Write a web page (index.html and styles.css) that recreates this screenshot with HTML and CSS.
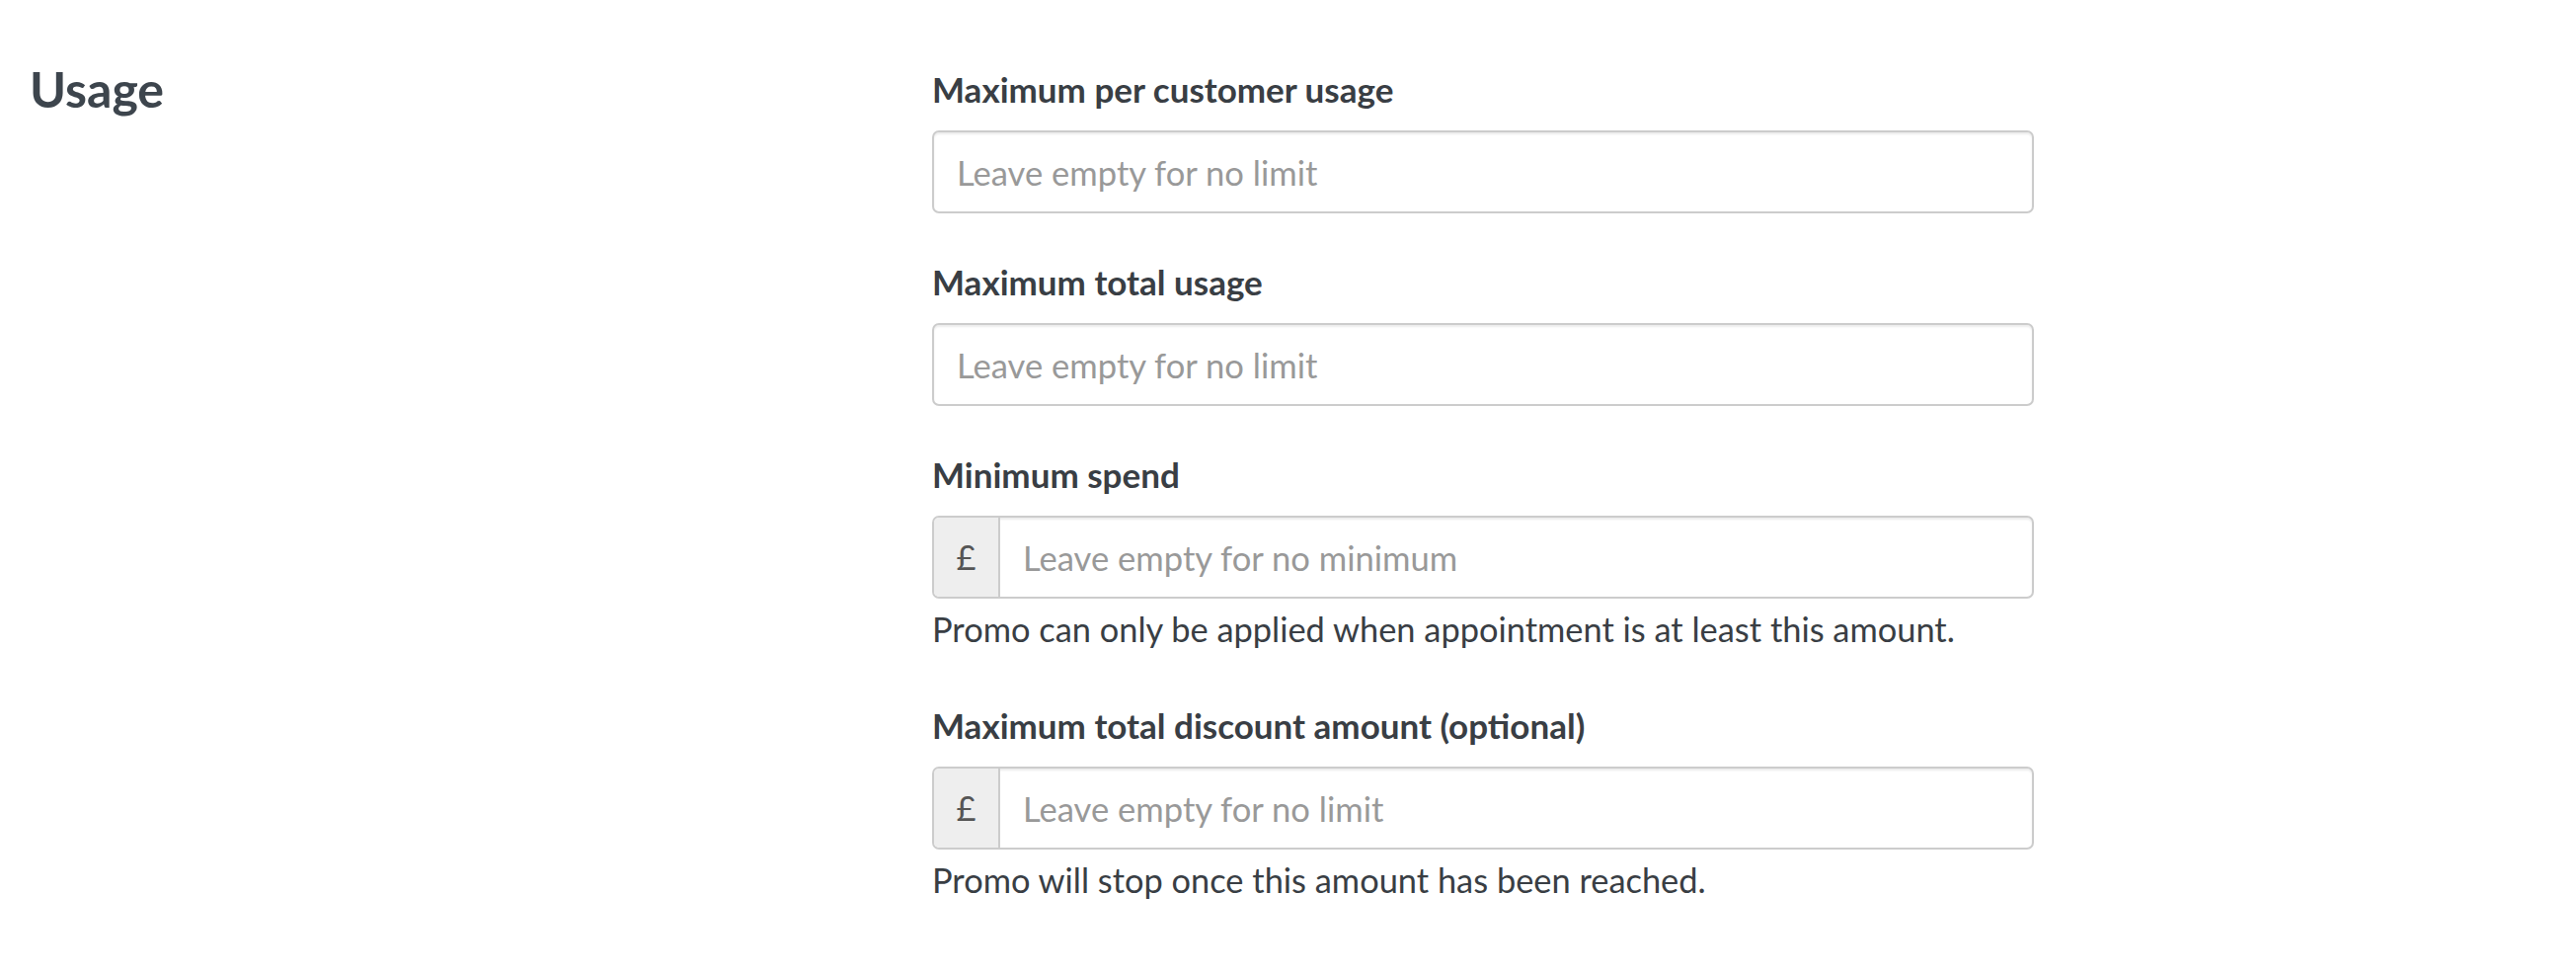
FILE: index.html
```html
<!DOCTYPE html>
<html lang="en">
<head>
<meta charset="utf-8">
<title>Usage</title>
<link rel="stylesheet" href="styles.css">
</head>
<body>
<section class="section">
  <div class="section-title-col">
    <h2 class="section-title">Usage</h2>
  </div>
  <form class="form-col">
    <div class="form-group">
      <label class="form-label">Maximum per customer usage</label>
      <div class="input-box">
        <input class="form-input" type="text" placeholder="Leave empty for no limit">
      </div>
    </div>
    <div class="form-group">
      <label class="form-label">Maximum total usage</label>
      <div class="input-box">
        <input class="form-input" type="text" placeholder="Leave empty for no limit">
      </div>
    </div>
    <div class="form-group has-help">
      <label class="form-label">Minimum spend</label>
      <div class="input-box">
        <span class="addon">£</span>
        <input class="form-input" type="text" placeholder="Leave empty for no minimum">
      </div>
      <p class="help">Promo can only be applied when appointment is at least this amount.</p>
    </div>
    <div class="form-group has-help">
      <label class="form-label">Maximum total discount amount (optional)</label>
      <div class="input-box">
        <span class="addon">£</span>
        <input class="form-input" type="text" placeholder="Leave empty for no limit">
      </div>
      <p class="help">Promo will stop once this amount has been reached.</p>
    </div>
  </form>
</section>
</body>
</html>
```
FILE: styles.css
```css
html, body {
  margin: 0;
  padding: 0;
  background: #ffffff;
}

body {
  font-family: Lato, "Open Sans", "Liberation Sans", sans-serif;
  font-size: 34.4px;
  line-height: 48px;
  color: #393e44;
}

.section {
  display: grid;
  grid-template-columns: 914px 1116px;
  padding: 60px 0 60px 30px;
}

.section-title {
  margin: 0;
  font-size: 50px;
  line-height: 60px;
  font-weight: 700;
  color: #3d454d;
}

.form-col {
  margin: 0;
  padding-top: 5.5px;
}

.form-group {
  margin-bottom: 44.5px;
}

.form-group.has-help {
  margin-bottom: 48.5px;
}

.form-label {
  display: block;
  font-size: 35px;
  font-weight: 700;
  margin-bottom: 18.5px;
}

.input-box {
  display: flex;
  height: 84px;
  box-sizing: border-box;
  border: 2px solid #cccccc;
  border-radius: 7px;
  overflow: hidden;
  box-shadow: inset 0 2px 2px rgba(0, 0, 0, 0.075);
  background: #ffffff;
}

.addon {
  flex: 0 0 auto;
  width: 65px;
  display: flex;
  align-items: center;
  justify-content: center;
  background: #eeeeee;
  border-right: 2px solid #cccccc;
  color: #555555;
}

.form-input {
  flex: 1 1 auto;
  min-width: 0;
  border: 0;
  outline: none;
  background: transparent;
  padding: 0 23px;
  font-family: inherit;
  font-size: 34.6px;
  color: #555555;
}

.form-input::placeholder {
  color: #999999;
  opacity: 1;
}

.help {
  margin: 7px 0 0;
}
```
